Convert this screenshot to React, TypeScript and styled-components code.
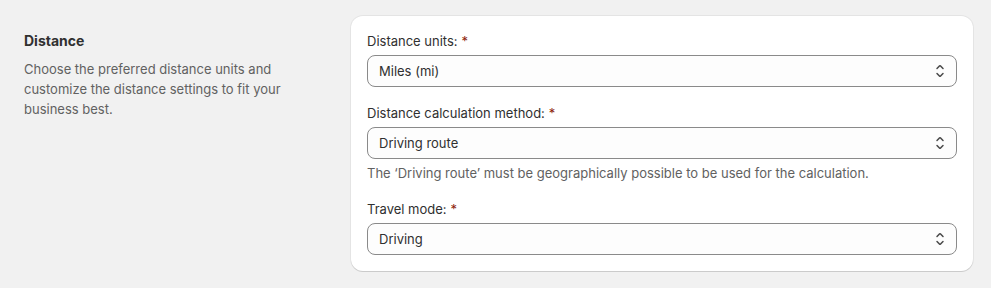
import * as React from "react";
import styled, { createGlobalStyle } from "styled-components";

const GlobalStyle = createGlobalStyle`
  html, body {
    margin: 0;
    padding: 0;
    background: #f1f1f1;
  }
  body {
    font-family: Inter, "Noto Sans", sans-serif;
    -webkit-font-smoothing: antialiased;
  }
`;

const Page = styled.div`
  width: 991px;
  height: 288px;
  box-sizing: border-box;
  background: #f1f1f1;
  padding: 16px 18px 0 24px;
  display: grid;
  grid-template-columns: 327px 622px;
  align-items: start;
`;

const Annotation = styled.div`
  padding-top: 15px;
  display: flex;
  flex-direction: column;
  gap: 8px;
`;

const Title = styled.h2`
  margin: 0;
  font-size: 14px;
  line-height: 20px;
  font-weight: 650;
  color: #303030;
`;

const Description = styled.p`
  margin: 0;
  max-width: 268px;
  font-size: 13px;
  line-height: 20px;
  color: #616161;
`;

const Card = styled.div`
  background: #ffffff;
  border-radius: 12px;
  padding: 15px 16px 16px;
  box-shadow: 0 0 0 1px rgba(0, 0, 0, 0.05), 0 1px 0 rgba(26, 26, 26, 0.12);
  display: flex;
  flex-direction: column;
  gap: 16px;
`;

const Field = styled.div`
  display: flex;
  flex-direction: column;
`;

const Label = styled.label`
  font-size: 13px;
  line-height: 20px;
  color: #303030;
  margin-bottom: 4px;
`;

const Required = styled.span`
  color: #8e1f0b;
  margin-left: 4px;
`;

const SelectBox = styled.div`
  position: relative;
  height: 32px;
  box-sizing: border-box;
  border: 1px solid #8a8a8a;
  border-radius: 8px;
  background: #fdfdfd;
  display: flex;
  align-items: center;
  justify-content: space-between;
  padding: 0 6px 0 11px;
  font-size: 13px;
  color: #303030;
`;

const HelpText = styled.div`
  margin-top: 4px;
  font-size: 13px;
  line-height: 20px;
  color: #616161;
`;

const SelectIcon = () => (
  <svg width="20" height="20" viewBox="0 0 20 20" fill="#4a4a4a">
    <path d="M10.884 4.323a1.25 1.25 0 0 0-1.768 0l-2.646 2.647a.75.75 0 0 0 1.06 1.06l2.47-2.47 2.47 2.47a.75.75 0 1 0 1.06-1.06l-2.646-2.647Z" />
    <path d="m13.53 13.03-2.646 2.647a1.25 1.25 0 0 1-1.768 0l-2.646-2.647a.75.75 0 0 1 1.06-1.06l2.47 2.47 2.47-2.47a.75.75 0 0 1 1.06 1.06Z" />
  </svg>
);

type SelectFieldProps = {
  label: string;
  value: string;
  help?: string;
};

const SelectField = ({ label, value, help }: SelectFieldProps) => (
  <Field>
    <Label>
      {label}
      <Required>*</Required>
    </Label>
    <SelectBox>
      <span>{value}</span>
      <SelectIcon />
    </SelectBox>
    {help && <HelpText>{help}</HelpText>}
  </Field>
);

const App = () => {
  return (
    <>
      <GlobalStyle />
      <Page>
        <Annotation>
          <Title>Distance</Title>
          <Description>
            Choose the preferred distance units and customize the distance
            settings to fit your business best.
          </Description>
        </Annotation>
        <Card>
          <SelectField label="Distance units:" value="Miles (mi)" />
          <SelectField
            label="Distance calculation method:"
            value="Driving route"
            help="The ‘Driving route’ must be geographically possible to be used for the calculation."
          />
          <SelectField label="Travel mode:" value="Driving" />
        </Card>
      </Page>
    </>
  );
};

export default App;
